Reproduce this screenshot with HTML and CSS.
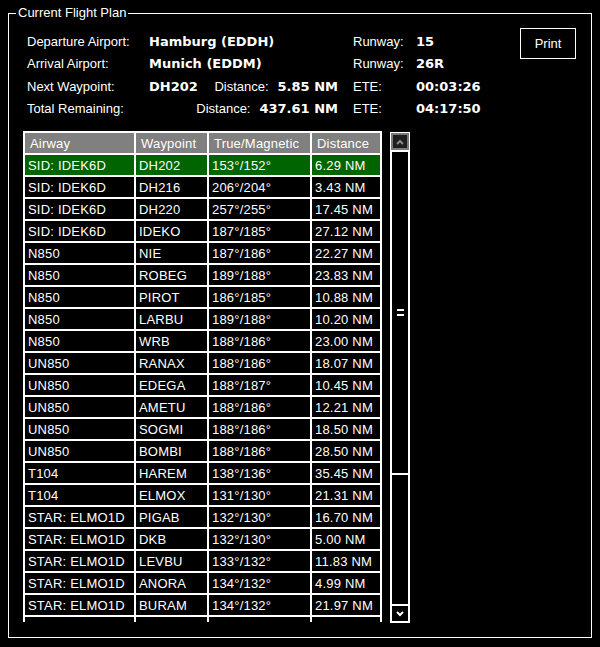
FILE: index.html
```html
<!DOCTYPE html>
<html lang="en">
<head>
    <meta charset="UTF-8">
    <meta name="viewport" content="width=device-width, initial-scale=1.0">
    <title>Current Flight Plan</title>
    <link rel="stylesheet" href="styles.css">
</head>
<body>
    <fieldset class="panel">
        <legend>Current Flight Plan</legend>
        <div class="panel-body">
            <div class="top">
                <div class="info">
                    <span class="lbl">Departure Airport:</span>
                    <span class="val">Hamburg (EDDH)</span>
                    <span class="lbl">Runway:</span>
                    <span class="val">15</span>

                    <span class="lbl">Arrival Airport:</span>
                    <span class="val">Munich (EDDM)</span>
                    <span class="lbl">Runway:</span>
                    <span class="val">26R</span>

                    <span class="lbl">Next Waypoint:</span>
                    <span class="split">
                        <span class="val">DH202</span>
                        <span class="dist"><span class="lbl">Distance:</span><span class="val">5.85 NM</span></span>
                    </span>
                    <span class="lbl">ETE:</span>
                    <span class="val">00:03:26</span>

                    <span class="lbl">Total Remaining:</span>
                    <span class="split">
                        <span></span>
                        <span class="dist"><span class="lbl">Distance:</span><span class="val">437.61 NM</span></span>
                    </span>
                    <span class="lbl">ETE:</span>
                    <span class="val">04:17:50</span>
                </div>
                <button class="print">Print</button>
            </div>

            <div class="list">
                <div class="table-wrap">
                    <table class="plan">
                        <colgroup>
                            <col class="c-airway">
                            <col class="c-wpt">
                            <col class="c-crs">
                            <col class="c-dist">
                        </colgroup>
                        <thead>
                            <tr><th>Airway</th><th>Waypoint</th><th>True/Magnetic</th><th>Distance</th></tr>
                        </thead>
                        <tbody>
                            <tr class="active"><td>SID: IDEK6D</td><td>DH202</td><td>153°/152°</td><td>6.29 NM</td></tr>
                            <tr><td>SID: IDEK6D</td><td>DH216</td><td>206°/204°</td><td>3.43 NM</td></tr>
                            <tr><td>SID: IDEK6D</td><td>DH220</td><td>257°/255°</td><td>17.45 NM</td></tr>
                            <tr><td>SID: IDEK6D</td><td>IDEKO</td><td>187°/185°</td><td>27.12 NM</td></tr>
                            <tr><td>N850</td><td>NIE</td><td>187°/186°</td><td>22.27 NM</td></tr>
                            <tr><td>N850</td><td>ROBEG</td><td>189°/188°</td><td>23.83 NM</td></tr>
                            <tr><td>N850</td><td>PIROT</td><td>186°/185°</td><td>10.88 NM</td></tr>
                            <tr><td>N850</td><td>LARBU</td><td>189°/188°</td><td>10.20 NM</td></tr>
                            <tr><td>N850</td><td>WRB</td><td>188°/186°</td><td>23.00 NM</td></tr>
                            <tr><td>UN850</td><td>RANAX</td><td>188°/186°</td><td>18.07 NM</td></tr>
                            <tr><td>UN850</td><td>EDEGA</td><td>188°/187°</td><td>10.45 NM</td></tr>
                            <tr><td>UN850</td><td>AMETU</td><td>188°/186°</td><td>12.21 NM</td></tr>
                            <tr><td>UN850</td><td>SOGMI</td><td>188°/186°</td><td>18.50 NM</td></tr>
                            <tr><td>UN850</td><td>BOMBI</td><td>188°/186°</td><td>28.50 NM</td></tr>
                            <tr><td>T104</td><td>HAREM</td><td>138°/136°</td><td>35.45 NM</td></tr>
                            <tr><td>T104</td><td>ELMOX</td><td>131°/130°</td><td>21.31 NM</td></tr>
                            <tr><td>STAR: ELMO1D</td><td>PIGAB</td><td>132°/130°</td><td>16.70 NM</td></tr>
                            <tr><td>STAR: ELMO1D</td><td>DKB</td><td>132°/130°</td><td>5.00 NM</td></tr>
                            <tr><td>STAR: ELMO1D</td><td>LEVBU</td><td>133°/132°</td><td>11.83 NM</td></tr>
                            <tr><td>STAR: ELMO1D</td><td>ANORA</td><td>134°/132°</td><td>4.99 NM</td></tr>
                            <tr><td>STAR: ELMO1D</td><td>BURAM</td><td>134°/132°</td><td>21.97 NM</td></tr>
                            <tr><td>&nbsp;</td><td></td><td></td><td></td></tr>
                        </tbody>
                    </table>
                </div>

                <div class="scrollbar">
                    <div class="sb-up">
                        <svg width="8" height="6" viewBox="0 0 8 6"><polyline points="1,5 4,2 7,5" fill="none" stroke="#8a8a8a" stroke-width="2"/></svg>
                    </div>
                    <div class="sb-thumb"><span class="grip"></span></div>
                    <div class="sb-track"></div>
                    <div class="sb-down">
                        <svg width="8" height="6" viewBox="0 0 8 6"><polyline points="1,1 4,4 7,1" fill="none" stroke="#fff" stroke-width="2"/></svg>
                    </div>
                </div>
            </div>
        </div>
    </fieldset>
</body>
</html>
```

FILE: styles.css
```css
* { box-sizing: border-box; }
body { margin: 0; padding-top: 5px; background-color: #000; color: #fff; font-family: "Liberation Sans", Arial, sans-serif; font-size: 13px; }

.panel { margin: 0 8px; padding: 0; border: 1px solid #fff; min-width: 0; }
.panel legend { margin-left: 7px; padding: 0 2px; line-height: 16px; }
.panel-body { padding: 7px 15px 14px 14px; }

.top { display: flex; justify-content: space-between; align-items: flex-start; }
.info { display: grid; grid-template-columns: 122px 204px 63px auto; grid-template-rows: 22px 23px 22px 22px; align-items: center; margin: 2px 0 0 4px; }
.lbl { font-weight: normal; }
.val { font-family: "DejaVu Sans", sans-serif; font-weight: bold; font-size: 13px; }
.split { display: flex; justify-content: space-between; padding-right: 15px; }
.dist { display: flex; gap: 9px; align-items: baseline; }

.print { width: 56px; height: 31px; border: 1px solid #fff; background-color: #000; color: #fff; font-family: inherit; font-size: 13px; padding: 0; }

.list { display: flex; gap: 8px; margin-top: 12px; }
.table-wrap { height: 491px; overflow: hidden; }
.plan { table-layout: fixed; width: 359px; border-collapse: separate; border-spacing: 2px; background-color: #fff; }
.c-airway { width: 109px; }
.c-wpt { width: 71px; }
.c-crs { width: 101px; }
.c-dist { width: 68px; }
.plan th, .plan td { padding: 2px 3px 0; line-height: 18px; text-align: left; font-weight: normal; white-space: nowrap; overflow: hidden; background-color: #000; letter-spacing: 0.2px; }
.plan th { background-color: #808080; padding-left: 5px; }
.plan tr.active td { background-color: #006400; }

.scrollbar { width: 20px; height: 491px; margin-top: 1px; display: flex; flex-direction: column; }
.sb-up { height: 18px; border: 1px solid #fff; border-bottom: none; background-color: #1e1e1e; box-shadow: inset 0 0 0 2px #7a7a7a; display: flex; align-items: center; justify-content: center; }
.sb-thumb { height: 325px; border: 2px solid #fff; display: flex; align-items: center; justify-content: center; }
.grip { width: 7px; height: 7px; border-top: 2px solid #fff; border-bottom: 2px solid #fff; }
.sb-track { flex: 1; border-left: 2px solid #fff; border-right: 2px solid #fff; }
.sb-down { height: 19px; border: 2px solid #fff; display: flex; align-items: center; justify-content: center; }
.sb-up svg, .sb-down svg { display: block; }
```
